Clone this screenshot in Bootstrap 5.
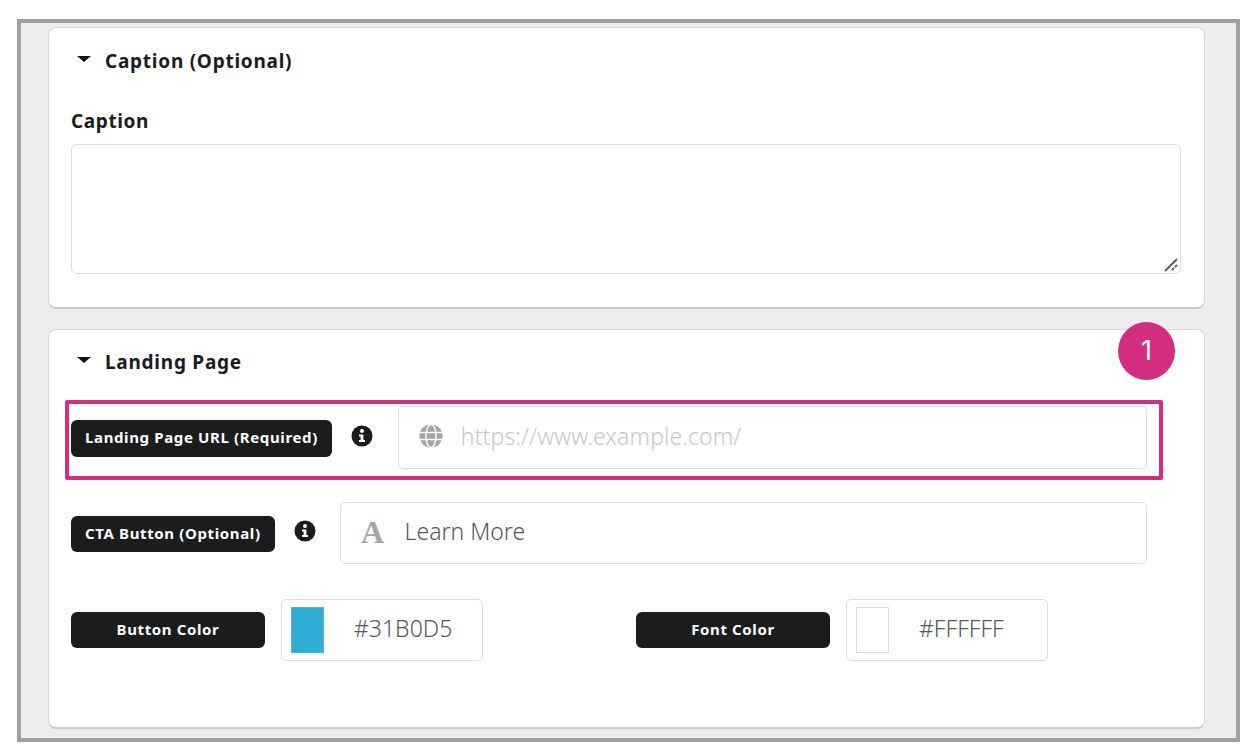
<!DOCTYPE html>
<html lang="en">
<head>
  <meta charset="UTF-8">
  <title>Landing Page</title>
  <link rel="stylesheet" href="https://cdn.jsdelivr.net/npm/bootstrap@5.3.0/dist/css/bootstrap.min.css">
  <style>
    body { background: #fff; font-family: "Noto Sans", "Liberation Sans", sans-serif; color: #1b1c1e; }
    .shot-frame {
      margin: 19px 11px 12px 17px;
      height: 723px;
      border: 4px solid #a0a0a0;
      background: #ededed;
      padding: 4px 31px 0 27px;
      overflow: hidden;
    }
    .panel {
      position: relative;
      background: #fff;
      border: 1px solid #d9d9d9;
      border-bottom: 2px solid #cbcbcb;
      border-radius: 8px;
    }
    .panel-one { height: 282px; padding: 0 23px 0 22px; margin-bottom: 20px; }
    .panel-two { height: 400px; padding: 0 57px 0 22px; }
    .panel-head { display: flex; align-items: center; font-size: 19px; font-weight: 700; height: 24px; letter-spacing: .75px; }
    .panel-one .panel-head { margin: 21px 0 0 6px; }
    .panel-two .panel-head { margin: 20px 0 0 6px; }
    .caret-down { width: 0; height: 0; border-left: 7px solid transparent; border-right: 7px solid transparent; border-top: 6px solid #111; margin: -5px 14px 0 0; }
    .field-title { font-size: 19px; font-weight: 700; line-height: 24px; margin: 36px 0 11px; letter-spacing: .6px; }
    .caption-box { position: relative; height: 130px; border: 1px solid #dedede; border-radius: 6px; }
    .grip { position: absolute; right: 1px; bottom: 1px; }
    .tag-dark {
      display: flex; align-items: center; justify-content: center;
      height: 36px; padding: 0 14px 2px; flex: none;
      background: #1b1c1e; color: #fff; border-radius: 6px;
      font-size: 15px; font-weight: 700; white-space: nowrap; letter-spacing: .63px;
    }
    .tag-wide { width: 194px; }
    .info-dot { margin: -4px 25px 0 20px; flex: none; }
    .text-field {
      flex: 1; height: 62px; display: flex; align-items: center;
      border: 1px solid #dedede; border-radius: 5px; padding: 0 0 3px 20px;
      font-size: 23px; font-weight: 300; color: #55585c;
    }
    .text-field .ph { color: #c8c8c8; margin-left: 18px; letter-spacing: .1px; }
    .text-field .val { margin-left: 20px; }
    .letter-a { font-family: "Liberation Serif", serif; font-weight: 700; color: #a6a6a6; font-size: 32px; width: 24px; text-align: center; line-height: 1; }
    .marked-row {
      display: flex; align-items: flex-start;
      margin: 26px -16px 0 -6px;
      height: 80px;
      border: 4px solid #d22d81;
      border-radius: 2px;
      padding: 2px 12px 0 2px;
    }
    .marked-row .tag-dark { margin-top: 14px; height: 37px; }
    .marked-row .info-dot { margin-top: 19px; margin-left: 19px; }
    .marked-row .text-field { height: 63px; }
    .plain-row { display: flex; align-items: center; margin-top: 22px; }
    .plain-row .tag-dark { margin-top: 2px; }
    .plain-row .info-dot { margin-left: 19px; margin-right: 24px; }
    .color-row { display: flex; align-items: center; margin-top: 35px; }
    .color-field {
      width: 202px; height: 62px; display: flex; align-items: center;
      border: 1px solid #dedede; border-radius: 5px; padding-left: 9px;
      font-size: 23px; font-weight: 300; color: #55585c; margin-left: 16px;
    }
    .swatch { width: 33px; height: 46px; border: 1px solid #dcdcdc; flex: none; }
    .swatch-blue { background: #2eaed4; border-color: #4cb9da; }
    .swatch-white { background: #fff; }
    .color-field .val { margin-left: 30px; margin-top: -3px; }
    .color-gap { width: 153px; }
    .step-dot {
      position: absolute; left: 1069px; top: -8px;
      width: 57px; height: 58px; border-radius: 50%;
      background: #d22d81; color: #fff;
      display: flex; align-items: center; justify-content: center;
      font-family: Inter, sans-serif; font-size: 27px; font-weight: 400;
    }
  </style>
</head>
<body class="m-0">
  <div class="shot-frame">

    <!-- caption -->
    <section class="panel panel-one">
      <div class="panel-head"><span class="caret-down"></span>Caption (Optional)</div>
      <div class="field-title">Caption</div>
      <div class="caption-box">
        <svg class="grip" width="16" height="16" viewBox="0 0 16 16"><path d="M2 15 14 3M9 14l2-2M12 11l2-2" stroke="#555" stroke-width="1.800" fill="none"/></svg>
      </div>
    </section>

    <!-- landing page -->
    <section class="panel panel-two">
      <div class="step-dot">1</div>
      <div class="panel-head"><span class="caret-down"></span>Landing Page</div>

      <div class="marked-row">
        <div class="tag-dark">Landing Page URL (Required)</div>
        <svg class="info-dot" width="22" height="22" viewBox="0 0 22 22"><circle cx="11" cy="11" r="10.500" fill="#1b1c1e"/><circle cx="11" cy="6" r="2" fill="#fff"/><path d="M8 9.500h4.400V15H14v2H8v-2h1.600v-3.500H8z" fill="#fff"/></svg>
        <div class="text-field">
          <svg width="24" height="24" viewBox="0 0 24 24" fill="none"><circle cx="12" cy="12" r="11.500" fill="#a3a3a3"/><g stroke="#fff" stroke-width="1.400"><ellipse cx="12" cy="12" rx="5" ry="11.500"/><path d="M1 8.500h22M1 15.500h22"/></g></svg>
          <span class="ph">https://www.example.com/</span>
        </div>
      </div>

      <div class="plain-row">
        <div class="tag-dark">CTA Button (Optional)</div>
        <svg class="info-dot" width="22" height="22" viewBox="0 0 22 22"><circle cx="11" cy="11" r="10.500" fill="#1b1c1e"/><circle cx="11" cy="6" r="2" fill="#fff"/><path d="M8 9.500h4.400V15H14v2H8v-2h1.600v-3.500H8z" fill="#fff"/></svg>
        <div class="text-field"><span class="letter-a">A</span><span class="val">Learn More</span></div>
      </div>

      <div class="color-row">
        <div class="tag-dark tag-wide">Button Color</div>
        <div class="color-field"><span class="swatch swatch-blue"></span><span class="val">#31B0D5</span></div>
        <div class="color-gap"></div>
        <div class="tag-dark tag-wide">Font Color</div>
        <div class="color-field"><span class="swatch swatch-white"></span><span class="val">#FFFFFF</span></div>
      </div>
    </section>
  </div>

  <script src="https://cdn.jsdelivr.net/npm/bootstrap@5.3.0/dist/js/bootstrap.bundle.min.js"></script>
</body>
</html>
